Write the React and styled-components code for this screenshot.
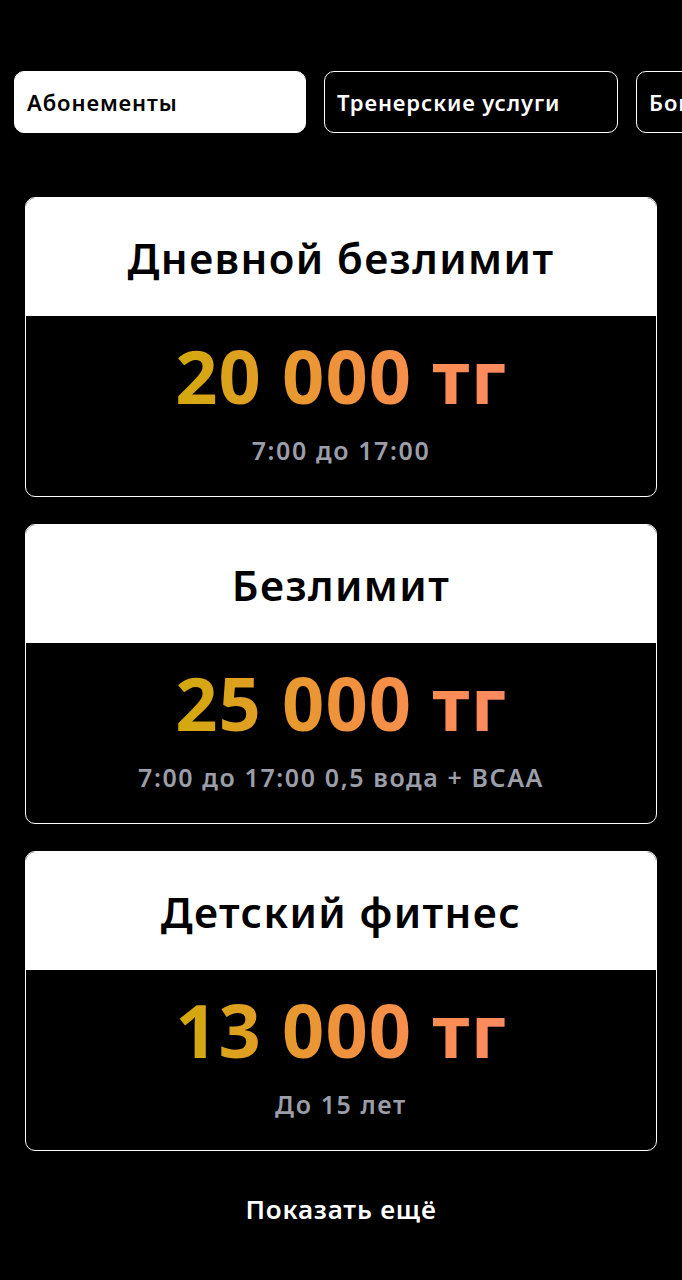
import React from "react";
import styled, { createGlobalStyle } from "styled-components";

const GlobalStyle = createGlobalStyle`
  html, body {
    margin: 0;
    padding: 0;
    background: #000;
  }
  body {
    font-family: "Noto Sans", "Open Sans", sans-serif;
    color: #fff;
  }
`;

const tabs = ["Абонементы", "Тренерские услуги", "Бонусы"];

const plans = [
  { title: "Дневной безлимит", price: "20 000 тг", note: "7:00 до 17:00" },
  { title: "Безлимит", price: "25 000 тг", note: "7:00 до 17:00 0,5 вода + BCAA" },
  { title: "Детский фитнес", price: "13 000 тг", note: "До 15 лет" },
];

function App() {
  return (
    <Page>
      <GlobalStyle />
      <Tabs>
        {tabs.map((t, i) => (
          <Tab key={t} active={i === 0}>
            {t}
          </Tab>
        ))}
      </Tabs>
      <Cards>
        {plans.map((p) => (
          <Card key={p.title}>
            <CardHead>{p.title}</CardHead>
            <CardBody>
              <Price>{p.price}</Price>
              <Note>{p.note}</Note>
            </CardBody>
          </Card>
        ))}
      </Cards>
      <More>Показать ещё</More>
    </Page>
  );
}

const Page = styled.div`
  width: 682px;
  min-height: 1280px;
  background: #000;
  overflow: hidden;
  padding-top: 71px;
  box-sizing: border-box;
`;

const Tabs = styled.div`
  display: flex;
  gap: 18px;
  padding-left: 14px;
  overflow: hidden;
`;

const Tab = styled.div`
  flex: 0 0 auto;
  width: ${(p) => (p.active ? "292px" : "294px")};
  height: 62px;
  box-sizing: border-box;
  display: flex;
  align-items: center;
  padding: 0 12px;
  border-radius: 10px;
  border: 1.5px solid #fff;
  background: ${(p) => (p.active ? "#fff" : "#000")};
  color: ${(p) => (p.active ? "#000" : "#fff")};
  font-size: 22px;
  font-weight: 600;
  letter-spacing: 0.9px;
  white-space: nowrap;
`;

const Cards = styled.div`
  display: flex;
  flex-direction: column;
  gap: 27px;
  margin: 64px 25px 0 25px;
`;

const Card = styled.div`
  border: 1.5px solid #fff;
  border-radius: 10px;
  overflow: hidden;
  height: 300px;
  box-sizing: border-box;
  display: flex;
  flex-direction: column;
`;

const CardHead = styled.div`
  height: 118px;
  background: #fff;
  color: #000;
  display: flex;
  align-items: center;
  justify-content: center;
  font-size: 42px;
  font-weight: 600;
  letter-spacing: 1.4px;
`;

const CardBody = styled.div`
  flex: 1;
  display: flex;
  flex-direction: column;
  align-items: center;
  padding-top: 16px;
`;

const Price = styled.div`
  font-size: 74px;
  font-weight: 700;
  line-height: 88px;
  letter-spacing: 1px;
  background: linear-gradient(90deg, #d2aa0c 0%, #f0923c 50%, #ff8a62 100%);
  -webkit-background-clip: text;
  background-clip: text;
  color: transparent;
`;

const Note = styled.div`
  margin-top: 13px;
  font-size: 25px;
  font-weight: 600;
  letter-spacing: 1.6px;
  color: #9b9ea8;
`;

const More = styled.div`
  margin-top: 40px;
  text-align: center;
  font-size: 26px;
  font-weight: 600;
  letter-spacing: 0.8px;
  color: #fff;
`;

export default App;
